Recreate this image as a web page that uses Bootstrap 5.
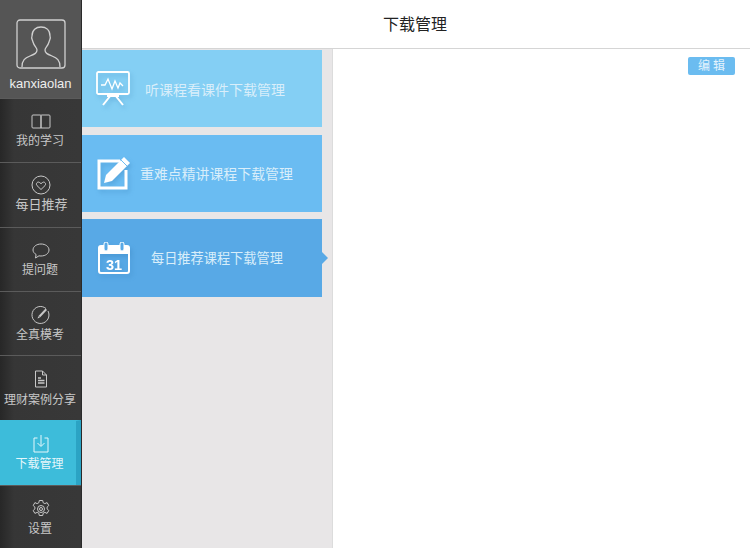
<!DOCTYPE html>
<html lang="zh-CN">
<head>
    <meta charset="UTF-8">
    <meta name="viewport" content="width=device-width, initial-scale=1.0">
    <title>下载管理</title>
    <link href="https://cdn.jsdelivr.net/npm/bootstrap@5.3.0/dist/css/bootstrap.min.css" rel="stylesheet">
    <style>
        body {
            width: 750px;
            height: 548px;
            overflow: hidden;
            background-color: #fff;
            font-family: "Liberation Sans", "Noto Sans CJK SC", sans-serif;
        }
        .side-bar {
            width: 82px;
            height: 548px;
            flex: none;
            background: linear-gradient(to right, #272727 0, #363636 14px, #383838 100%);
            border-right: 1px solid #2a2a2a;
        }
        .side-user {
            height: 98px;
            background-color: #555;
            color: #eee;
            font-size: 13px;
            line-height: 16px;
            padding-top: 19px;
        }
        .side-user span {
            margin-top: 7px;
        }
        .side-item {
            color: #c8c8c8;
            font-size: 12px;
            line-height: 16px;
            border-top: 1px solid #5b5b5b;
            padding-top: 13px;
            padding-right: 1px;
        }
        .side-item svg {
            margin-bottom: 2px;
            margin-left: 2px;
        }
        .side-item.tall-gap svg {
            margin-bottom: 3px;
        }
        .side-item.tight-gap svg {
            margin-bottom: 1px;
        }
        .side-item.bigger {
            font-size: 13px;
            padding-top: 12px;
        }
        .side-item.bigger span {
            margin-left: 3px;
        }
        .side-item.active-item {
            background-color: #3dbcda;
            color: #e6f7fb;
            border-top-color: #3dbcda;
            border-right: 5px solid #2ba3c4;
            padding-right: 0;
        }
        .side-item.active-item span, .side-item.active-item svg {
            margin-right: -3px;
        }
        .top-title {
            height: 49px;
            flex: none;
            color: #222;
            font-size: 16px;
            padding: 2px 2px 0 0;
            border-bottom: 1px solid #d5d5d5;
        }
        .cat-col {
            width: 250px;
            flex: none;
            background-color: #e8e6e7;
            padding-top: 1px;
        }
        .cat-card {
            width: 240px;
            color: #d9eefa;
            font-size: 14px;
            position: relative;
        }
        .cat-card svg {
            filter: drop-shadow(2px 3px 2px rgba(40, 110, 170, .25));
        }
        .cat-1 { height: 77px; background-color: #84cff4; padding-left: 14px; gap: 14px; margin-bottom: 8px; }
        .cat-1 span { padding-top: 3px; }
        .cat-2 { height: 77px; background-color: #6abcf2; padding-left: 15px; gap: 10px; margin-bottom: 7px; font-size: 13.9px; }
        .cat-2 span { padding-top: 2px; }
        .cat-3 { height: 78px; background-color: #58a9e6; padding-left: 16px; gap: 21px; font-size: 13.2px; }
        .cat-3 span { padding-top: 2px; }
        .cat-3::after {
            content: "";
            position: absolute;
            right: -6px;
            top: 33px;
            border-left: 6px solid #58a9e6;
            border-top: 6px solid transparent;
            border-bottom: 6px solid transparent;
        }
        .pane-right {
            border-left: 1px solid #dcdcdc;
        }
        .edit-btn {
            width: 47px;
            height: 18px;
            padding: 0 0 0 3px;
            margin: 8px 15px 0 0;
            background-color: #6bbcf0;
            color: #e3f3fd;
            font-size: 12px;
            line-height: 18px;
            letter-spacing: 3px;
            border: 0;
            border-radius: 2px;
        }
    </style>
</head>
<body>
    <div class="d-flex">
        <div class="side-bar d-flex flex-column">
            <div class="side-user d-flex flex-column align-items-center">
                <svg width="50" height="50" viewBox="0 0 50 50" fill="none" stroke="#d0d0d0" stroke-width="1.3">
                    <rect x="1" y="1" width="48" height="48" rx="3"/>
                    <path d="M6 48c0-7 3-9 8-11s7-3 7-6c0-2-3-4-4-8-1-3-2-4-1-6 0-6 4-9 9-9s9 3 9 9c1 2 0 3-1 6-1 4-4 6-4 8 0 3 2 4 7 6s8 4 8 11"/>
                </svg>
                <span>kanxiaolan</span>
            </div>
            <div class="side-item tall-gap d-flex flex-column align-items-center" style="height:64px">
                <svg width="20" height="18" viewBox="0 0 20 18" fill="none" stroke="#c8c8c8" stroke-width="1">
                    <path d="M2 3h7.500c.3 0 .5.200.5.500V16H2a1 1 0 0 1-1-1V4a1 1 0 0 1 1-1zM18 3h-7.500c-.3 0-.5.200-.5.500V16h8a1 1 0 0 0 1-1V4a1 1 0 0 0-1-1z"/>
                </svg>
                <span>我的学习</span>
            </div>
            <div class="side-item bigger d-flex flex-column align-items-center" style="height:65px">
                <svg width="20" height="20" viewBox="0 0 20 20" fill="none" stroke="#c8c8c8" stroke-width="1">
                    <circle cx="10" cy="10" r="9"/>
                    <path d="M10 14.500 6 10.600c-1.800-2.200.9-4.600 2.700-3L10 8.700l1.300-1.100c1.800-1.600 4.500.8 2.700 3z"/>
                </svg>
                <span>每日推荐</span>
            </div>
            <div class="side-item tight-gap d-flex flex-column align-items-center" style="height:64px">
                <svg width="20" height="20" viewBox="0 0 20 20" fill="none" stroke="#c8c8c8" stroke-width="1">
                    <path d="M10 3c4.500 0 8 2.600 8 6s-3.500 6-8 6c-.7 0-1.300 0-2-.2L4.500 17l.6-3.500C3.200 12.400 2 10.800 2 9c0-3.400 3.500-6 8-6z"/>
                </svg>
                <span>提问题</span>
            </div>
            <div class="side-item d-flex flex-column align-items-center" style="height:64px">
                <svg width="20" height="20" viewBox="0 0 20 20" fill="none" stroke="#c8c8c8" stroke-width="1">
                    <path d="M15 3.500A8.500 8.500 0 1 0 17 6"/>
                    <path d="M6.500 13.500l1-2.500 7-7.500 1.500 1.500-7 7.500z" fill="#c8c8c8" stroke="none"/>
                    <path d="M8 11.500 9 12.500" stroke="#383838"/>
                </svg>
                <span>全真模考</span>
            </div>
            <div class="side-item tall-gap d-flex flex-column align-items-center" style="height:65px">
                <svg width="20" height="20" viewBox="0 0 20 20" fill="none" stroke="#c8c8c8" stroke-width="1">
                    <path d="M4.500 2h7l4 4v12h-11z"/>
                    <path d="M11.500 2v4h4"/>
                    <path d="M7 9h3M7 11.500h6.500M7 14h6.500" stroke-width="1.300"/>
                </svg>
                <span>理财案例分享</span>
            </div>
            <div class="side-item active-item d-flex flex-column align-items-center" style="height:65px">
                <svg width="20" height="20" viewBox="0 0 20 20" fill="none" stroke="#e6f7fb" stroke-width="1">
                    <path d="M6.500 4H3v14h14V4h-3.500"/>
                    <path d="M10 1v11M6.500 9l3.500 3.500L13.500 9"/>
                </svg>
                <span>下载管理</span>
            </div>
            <div class="side-item d-flex flex-column align-items-center flex-grow-1">
                <svg width="20" height="20" viewBox="0 0 20 20" fill="none" stroke="#c8c8c8" stroke-width="1">
                    <path d="M8.300 1.500h3.400l.5 2.300 1.700.8 2.200-1 1.700 2.900-1.700 1.600v1.800l1.700 1.600-1.700 2.900-2.200-1-1.700.8-.5 2.300H8.300l-.5-2.300-1.700-.8-2.200 1-1.700-2.900 1.700-1.600V8.100L2.200 6.500l1.700-2.900 2.200 1 1.700-.8z" stroke-linejoin="round"/>
                    <circle cx="10" cy="10" r="3.500"/>
                    <circle cx="10" cy="10" r="1.500"/>
                </svg>
                <span>设置</span>
            </div>
        </div>

        <div class="flex-grow-1 d-flex flex-column" style="height:548px">
            <div class="top-title d-flex align-items-center justify-content-center">下载管理</div>
            <div class="d-flex flex-grow-1">
                <div class="cat-col d-flex flex-column">
                    <div class="cat-card cat-1 d-flex align-items-center">
                        <svg width="35" height="35" viewBox="0 0 35 35" fill="none" stroke="#fff" stroke-width="1.800">
                            <rect x="1" y="1" width="32" height="22" rx="1.500"/>
                            <path d="M5 14h4l3-6 4 10 3-8 3 7 2-5 3 3" stroke-width="1.300"/>
                            <path d="M15 24 7 34M19 24l8 10M11 25h12" stroke-width="2"/>
                        </svg>
                        <span>听课程看课件下载管理</span>
                    </div>
                    <div class="cat-card cat-2 d-flex align-items-center">
                        <svg width="33" height="33" viewBox="0 0 33 33" fill="none">
                            <path d="M23 4H2v27h27V13" stroke="#fff" stroke-width="3"/>
                            <path d="M27 0l6 6-18 18-8 2 2-8z" fill="#fff"/>
                            <path d="M24 3l6 6" stroke="#6abcf2" stroke-width="1"/>
                        </svg>
                        <span>重难点精讲课程下载管理</span>
                    </div>
                    <div class="cat-card cat-3 d-flex align-items-center">
                        <svg width="32" height="32" viewBox="0 0 32 32" fill="none">
                            <path d="M3 3h26a3 3 0 0 1 3 3v6H0V6a3 3 0 0 1 3-3z" fill="#fff"/>
                            <path d="M1 12v17a2 2 0 0 0 2 2h26a2 2 0 0 0 2-2V12" stroke="#fff" stroke-width="2"/>
                            <rect x="6" y="0" width="4" height="9" rx="2" fill="#58a9e6" stroke="#fff"/>
                            <rect x="22" y="0" width="4" height="9" rx="2" fill="#58a9e6" stroke="#fff"/>
                            <text x="16" y="27.500" text-anchor="middle" fill="#fff" font-size="14.500" font-weight="700" font-family="Liberation Sans">31</text>
                        </svg>
                        <span>每日推荐课程下载管理</span>
                    </div>
                </div>
                <div class="pane-right flex-grow-1 d-flex justify-content-end align-items-start">
                    <button type="button" class="btn edit-btn">编辑</button>
                </div>
            </div>
        </div>
    </div>

    <script src="https://cdn.jsdelivr.net/npm/bootstrap@5.3.0/dist/js/bootstrap.bundle.min.js"></script>
</body>
</html>
